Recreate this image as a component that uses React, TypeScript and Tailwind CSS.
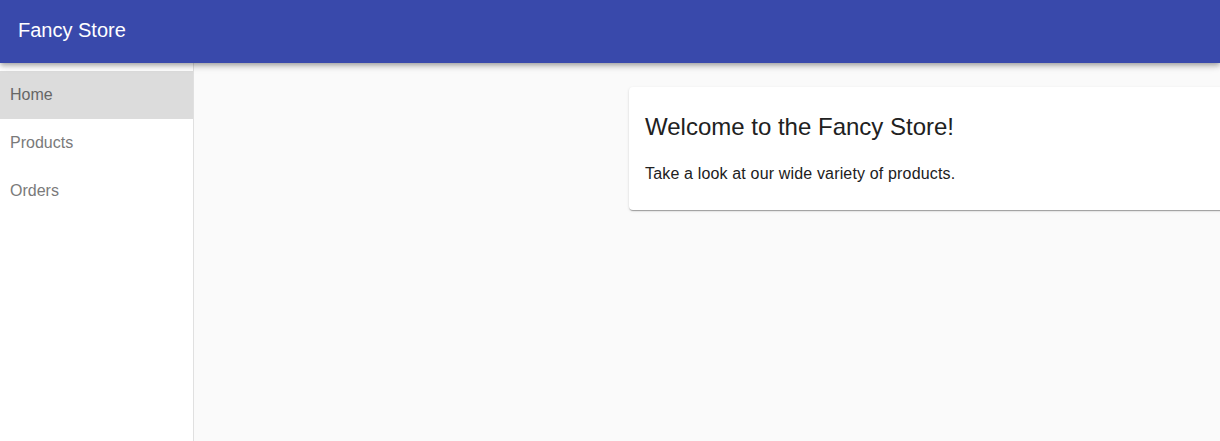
export default function App() {
  const nav = ["Home", "Products", "Orders"]

  return (
    <div className="flex h-screen flex-col overflow-hidden bg-[#fafafa] font-['Liberation_Sans',Arial,sans-serif]">
      <header className="relative z-10 flex h-[63px] shrink-0 items-center bg-[#3949ab] px-[18px] pb-[3px] text-[20px] text-white shadow-[0_2px_4px_-1px_rgba(0,0,0,0.2),0_4px_5px_0_rgba(0,0,0,0.14),0_1px_10px_0_rgba(0,0,0,0.12)]">
        Fancy Store
      </header>

      <div className="flex min-h-0 flex-1">
        <aside className="w-[194px] shrink-0 border-r border-[#e0e0e0] bg-white pt-2">
          <nav className="flex flex-col">
            {nav.map((item, i) => (
              <div
                key={item}
                className={
                  i === 0
                    ? "flex h-12 items-center bg-[#dcdcdc] px-[10px] text-base text-[#666666]"
                    : "flex h-12 items-center px-[10px] text-base text-[#7a7a7a]"
                }
              >
                {item}
              </div>
            ))}
          </nav>
        </aside>

        <main className="flex min-w-0 flex-1 overflow-hidden pt-6">
          <div className="ml-[435px] h-[123px] w-[800px] shrink-0 rounded bg-white px-4 py-6 shadow-[0_2px_1px_-1px_rgba(0,0,0,0.2),0_1px_1px_0_rgba(0,0,0,0.14),0_1px_3px_0_rgba(0,0,0,0.12)]">
            <h2 className="mb-[19px] text-[24px] leading-8 text-[#212121]">
              Welcome to the Fancy Store!
            </h2>
            <p className="text-base leading-6 tracking-[0.16px] text-[#212121]">
              Take a look at our wide variety of products.
            </p>
          </div>
        </main>
      </div>
    </div>
  )
}
